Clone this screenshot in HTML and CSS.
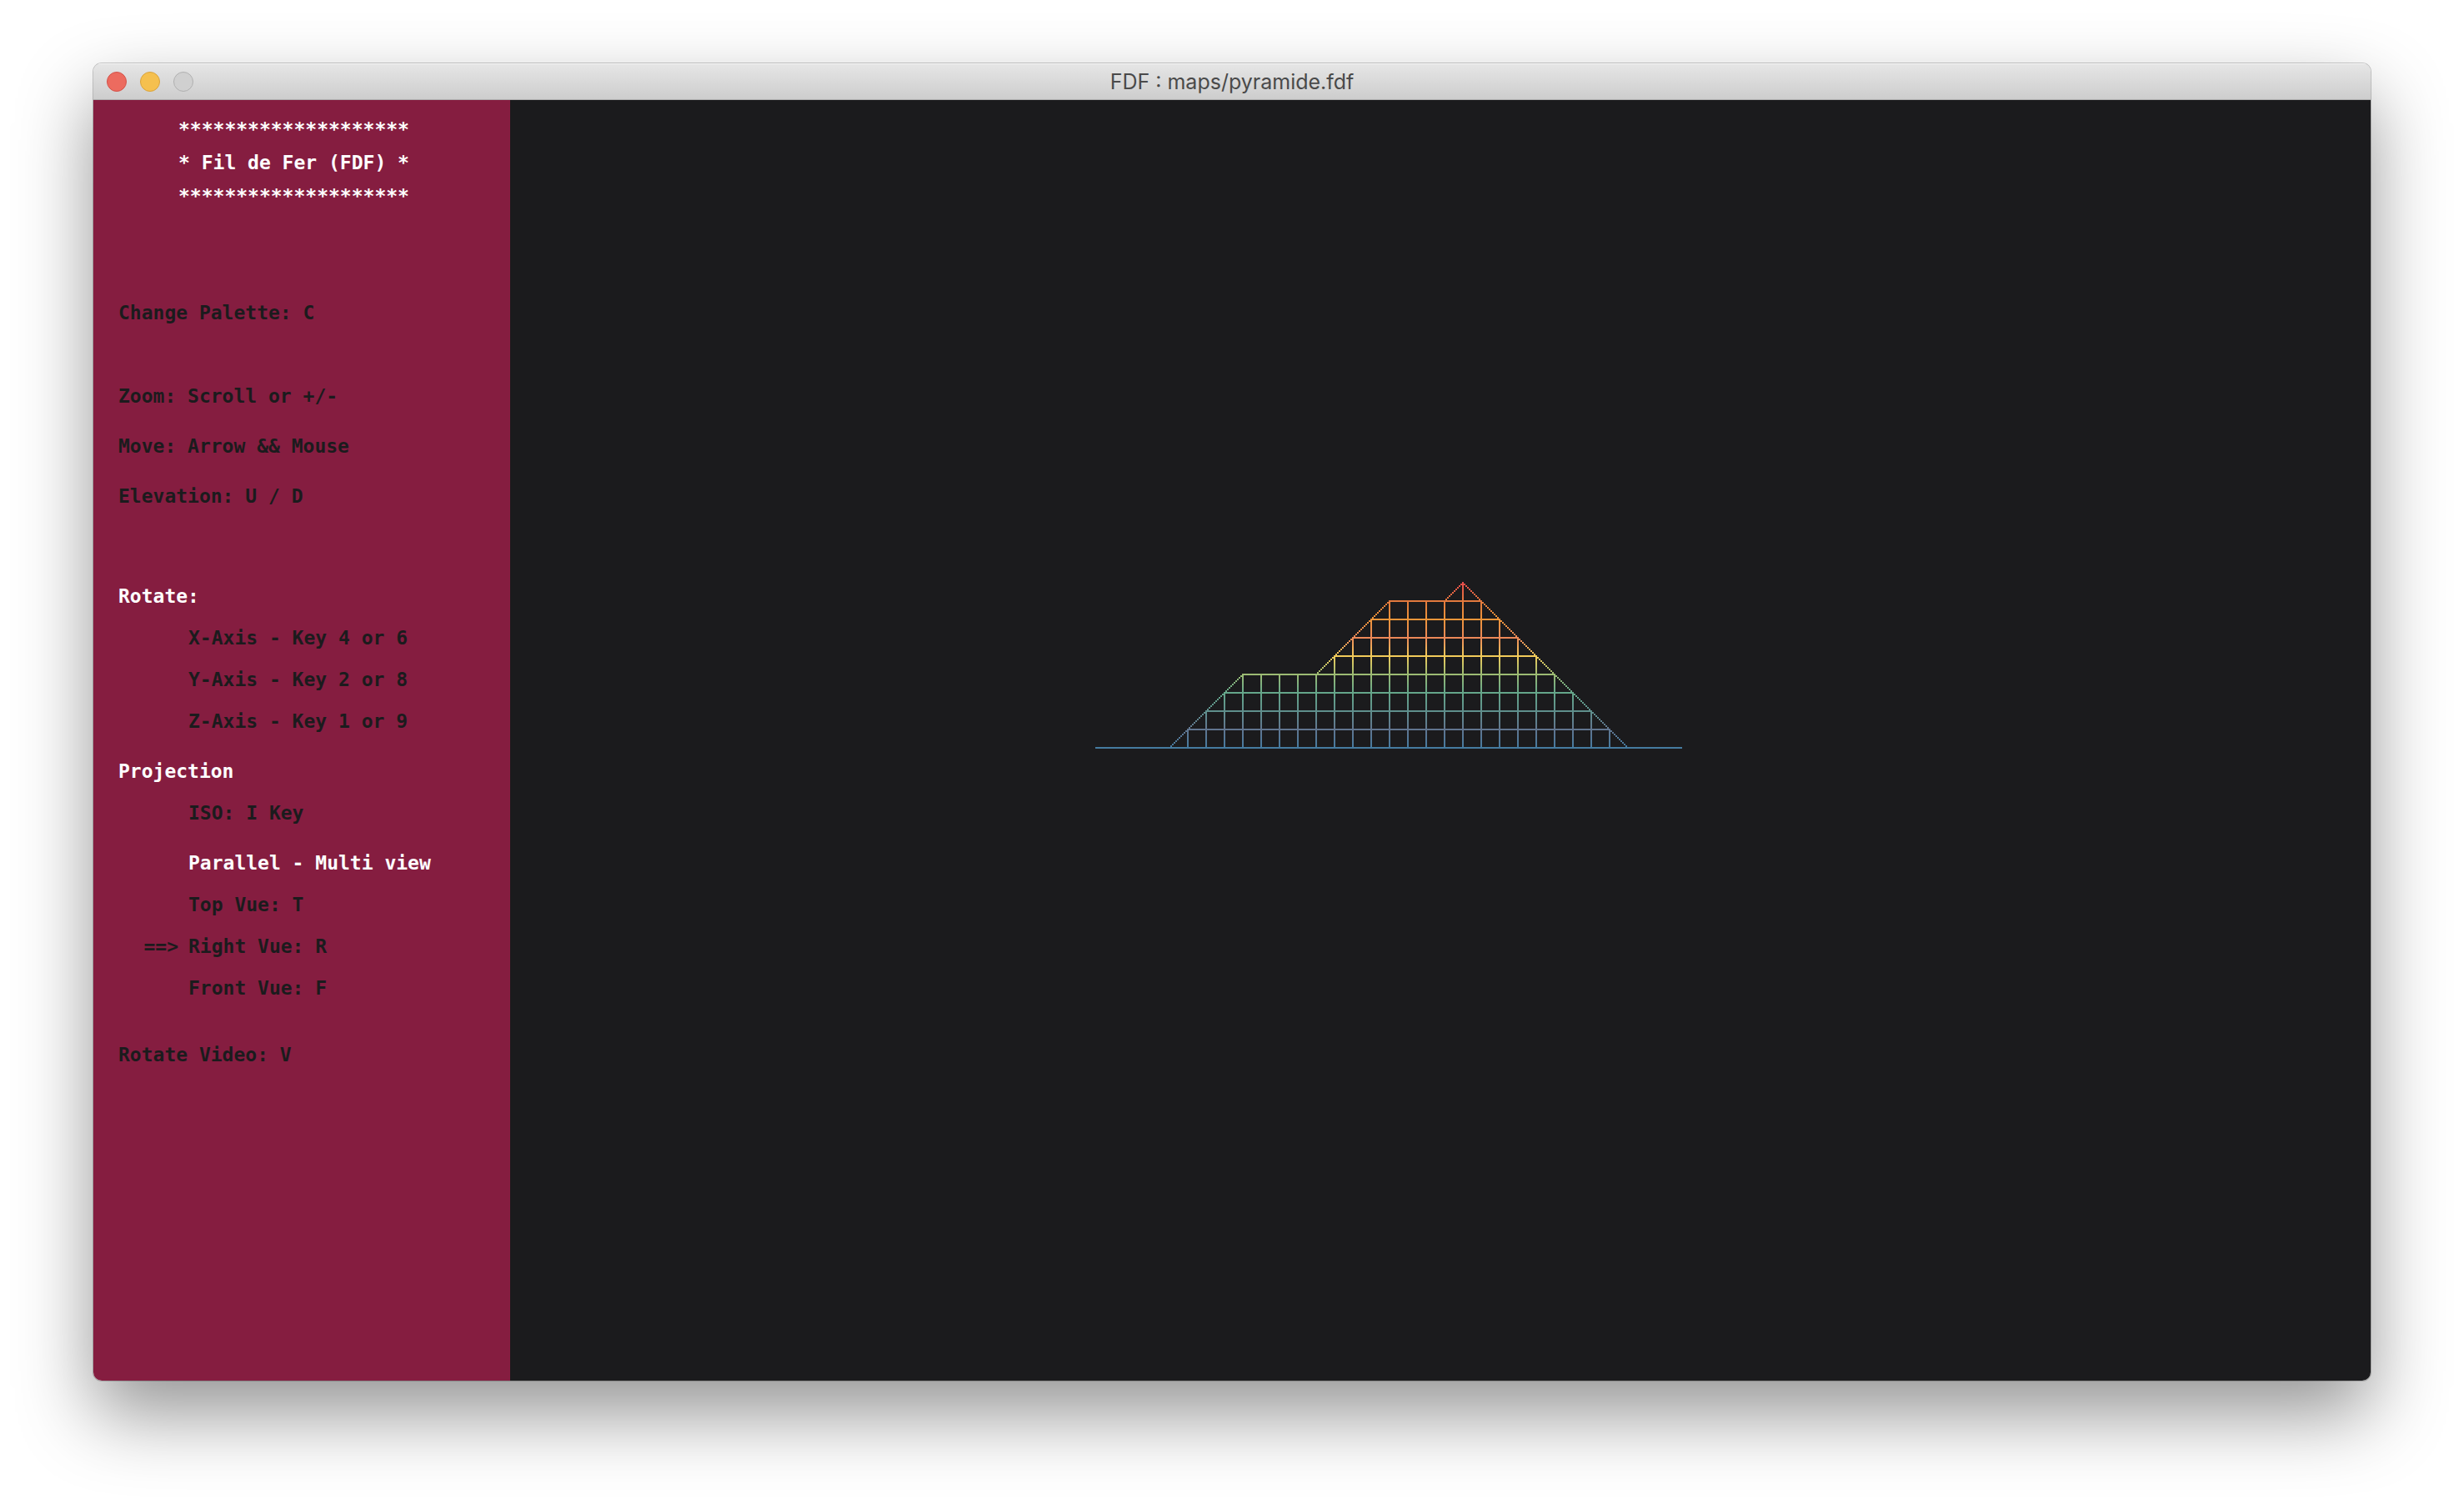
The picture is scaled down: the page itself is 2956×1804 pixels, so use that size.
FILE: index.html
```html
<!DOCTYPE html>
<html lang="en">
<head>
<meta charset="utf-8">
<title>FDF : maps/pyramide.fdf</title>
<link rel="stylesheet" href="styles.css">
</head>
<body>
<div class="window">
  <header class="titlebar">
    <div class="lights">
      <button class="light light-close" type="button" aria-label="Close"></button>
      <button class="light light-minimize" type="button" aria-label="Minimize"></button>
      <button class="light light-zoom" type="button" aria-label="Zoom" disabled></button>
    </div>
    <h1 class="window-title">FDF : maps/pyramide.fdf</h1>
  </header>
  <div class="content">
    <aside class="menu">
      <div class="banner">
        <p>********************</p>
        <h2>* Fil de Fer (FDF) *</h2>
        <p>********************</p>
      </div>
      <p class="palette">Change Palette: C</p>
      <ul class="controls">
        <li>Zoom: Scroll or +/-</li>
        <li>Move: Arrow &amp;&amp; Mouse</li>
        <li>Elevation: U / D</li>
      </ul>
      <section class="group">
        <h3>Rotate:</h3>
        <ul class="keys">
          <li>X-Axis - Key 4 or 6</li>
          <li>Y-Axis - Key 2 or 8</li>
          <li>Z-Axis - Key 1 or 9</li>
        </ul>
      </section>
      <section class="group">
        <h3>Projection</h3>
        <ul class="keys">
          <li>ISO: I Key</li>
        </ul>
      </section>
      <section class="group">
        <h4>Parallel - Multi view</h4>
        <ul class="keys">
          <li>Top Vue: T</li>
          <li class="selected"><span class="marker">==&gt;</span>Right Vue: R</li>
          <li>Front Vue: F</li>
        </ul>
      </section>
      <p class="video">Rotate Video: V</p>
    </aside>
    <main class="view">
      <svg class="wireframe" viewBox="0 0 2232 1536" role="img" aria-label="Wireframe of the pyramid seen from the right"></svg>
    </main>
  </div>
</div>
<script src="wireframe.js"></script>
</body>
</html>
```
FILE: wireframe.js
```js
// Side elevation of the map: the height of each column of the outline.
const CELL = 11;
const HEIGHTS = [0, 0, 0, 0, 0, 1, 2, 3, 4, 4, 4, 4, 4, 5, 6, 7, 8, 8, 8, 8, 9,
  8, 7, 6, 5, 4, 3, 2, 1, 0, 0, 0, 0];
const COLORS = [[69, 123, 160], [97, 117, 143], [95, 143, 140], [101, 166, 138],
  [156, 187, 115], [242, 203, 90], [236, 136, 88], [238, 149, 58],
  [227, 121, 61], [232, 77, 75]];
const ORIGIN = { x: 351, y: 388 };
const svg = document.querySelector(".wireframe");

// The outline's peak falls on column 20 and its slopes rise one cell a column.
function colorAt(height) {
  const low = Math.min(Math.floor(height), COLORS.length - 2);
  const t = height - low;
  const mix = COLORS[low].map((c, i) => Math.round(c + (COLORS[low + 1][i] - c) * t));
  return `rgb(${mix.join(",")})`;
}

function block(x, y, width, color) {
  const rect = document.createElementNS("http://www.w3.org/2000/svg", "rect");
  rect.setAttribute("x", x * 2);
  rect.setAttribute("y", y * 2);
  rect.setAttribute("width", width * 2);
  rect.setAttribute("height", 2);
  rect.setAttribute("fill", color);
  svg.append(rect);
}

// Vertical edges and slopes, one drawn dot per step.
HEIGHTS.forEach((height, column) => {
  const x = ORIGIN.x + column * CELL;
  for (let i = 0; height > 0 && i <= height * CELL; i++) {
    block(x, ORIGIN.y - i, 1, colorAt(i / CELL));
  }
  const next = HEIGHTS[column + 1];
  if (next !== undefined && next !== height) {
    for (let i = 0; i <= CELL; i++) {
      const h = height + (next - height) * i / CELL;
      block(x + i, ORIGIN.y - Math.round(h * CELL), 1, colorAt(h));
    }
  }
});

// Horizontal edges join neighbouring columns that both reach the level.
for (let level = 0; level < COLORS.length; level++) {
  for (let column = 0; column < HEIGHTS.length - 1; column++) {
    if (HEIGHTS[column] >= level && HEIGHTS[column + 1] >= level) {
      block(ORIGIN.x + column * CELL, ORIGIN.y - level * CELL, CELL, colorAt(level));
    }
  }
}
```
FILE: styles.css
```css
* {
  box-sizing: border-box;
}

body {
  margin: 0;
  min-height: 100vh;
  padding: 76px 112px 148px;
  display: flex;
  background: #fff;
}

h1, h2, h3, h4, p, ul {
  margin: 0;
  padding: 0;
  font-size: inherit;
  font-weight: inherit;
  list-style: none;
}

.window {
  flex: 1;
  display: flex;
  flex-direction: column;
  overflow: hidden;
  border-radius: 10px;
  box-shadow: 0 0 0 1px rgba(0, 0, 0, 0.2), 0 40px 90px rgba(0, 0, 0, 0.42);
}

.titlebar {
  display: grid;
  grid-template-columns: 1fr auto 1fr;
  align-items: center;
  height: 44px;
  padding: 1px 16px 0;
  background: linear-gradient(#e6e6e6, #cdcdcd);
  border-bottom: 1px solid #aeaeae;
  box-shadow: inset 0 1px #f6f6f6;
}

.lights {
  display: flex;
  gap: 16px;
}

.light {
  width: 24px;
  height: 24px;
  padding: 0;
  border: 1px solid;
  border-radius: 50%;
}

.light-close {
  background: #ec6b5f;
  border-color: #d3524a;
}

.light-minimize {
  background: #f5c04f;
  border-color: #d9a33c;
}

.light-zoom {
  background: #d0d0d0;
  border-color: #b0b0b0;
}

.window-title {
  font: 25px/32px Inter, sans-serif;
  color: #4a4a4a;
}

.content {
  flex: 1;
  display: flex;
}

.menu {
  flex: none;
  width: 500px;
  padding: 15px 30px;
  background: #851d40;
  color: #1b1b1d;
  font: bold 23px/40px "DejaVu Sans Mono", monospace;
  white-space: nowrap;
}

.banner {
  margin-left: 72px;
  color: #fff;
}

.palette {
  margin-top: 100px;
}

.controls {
  display: grid;
  gap: 20px;
  margin: 60px 0 80px;
}

.group {
  display: grid;
  gap: 10px;
  margin-bottom: 20px;
}

.group h3,
.group h4 {
  color: #fff;
}

.group h4,
.keys {
  padding-left: 84px;
}

.keys {
  display: grid;
  gap: 10px;
}

.selected {
  display: flex;
  margin-left: -84px;
}

.marker {
  width: 84px;
  padding-right: 12px;
  text-align: right;
}

.video {
  margin-top: 40px;
}

.view {
  flex: 1;
  display: flex;
  min-width: 0;
  background: #1b1b1d;
}

.wireframe {
  width: 100%;
  shape-rendering: crispEdges;
}
```
